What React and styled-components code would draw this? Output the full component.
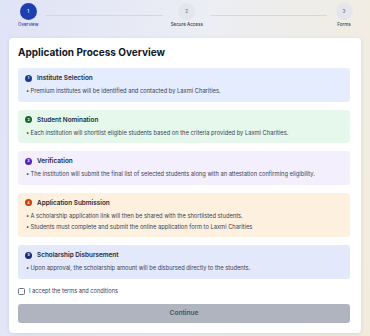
import React, {useState} from 'react';
import styled, {createGlobalStyle} from "styled-components";

const GlobalStyle = createGlobalStyle`
  html, body {
    margin: 0;
    padding: 0;
  }
  body {
    font-family: Inter, "Noto Sans", sans-serif;
    color: #1f2937;
  }
`;

const Page = styled.div`
  width: 370px;
  height: 336px;
  box-sizing: border-box;
  overflow: hidden;
  padding-top: 1px;
  background: linear-gradient(100deg, #dfe3f6 0%, #eceef4 50%, #f2ecdc 100%);
`;

const Stepper = styled.div`
  display: flex;
  align-items: center;
  padding: 0 17px 0 18px;
  height: 28px;
  margin-bottom: 9px;
`;

const Step = styled.div`
  display: flex;
  flex-direction: column;
  align-items: center;
  gap: 2px;
  min-width: 18px;
`;

const StepCircle = styled.div`
  width: 17px;
  height: 17px;
  border-radius: 50%;
  display: flex;
  align-items: center;
  justify-content: center;
  font-size: 4.5px;
  font-weight: 500;
  background: ${p => p.$active ? "#1e40af" : "#e4e6ec"};
  color: ${p => p.$active ? "#ffffff" : "#6b7280"};
`;

const StepLabel = styled.div`
  font-size: 4.5px;
  line-height: 6px;
  font-weight: 500;
  white-space: nowrap;
  color: ${p => p.$active ? "#1e40af" : "#374151"};
`;

const StepLine = styled.div`
  flex: 1;
  height: 1px;
  margin: 0 8px;
  background: #d4d7de;
`;

const Card = styled.div`
  margin: 0 9px;
  background: #ffffff;
  border-radius: 4px;
  box-shadow: 0 1px 4px rgba(60, 60, 90, 0.12);
  padding: 8px 11px 10px 9px;
  box-sizing: border-box;
  height: 295px;
`;

const Title = styled.h1`
  margin: 0 0 10px;
  font-size: 10px;
  line-height: 12px;
  font-weight: 700;
  color: #111827;
`;

const Sections = styled.div`
  display: flex;
  flex-direction: column;
  gap: 8px;
`;

const Section = styled.div`
  background: ${p => p.$bg};
  border-radius: 3px;
  padding: 6px 7px 5.5px;
`;

const SectionHead = styled.div`
  display: flex;
  align-items: center;
  gap: 5px;
  height: 8px;
`;

const Badge = styled.span`
  width: 7px;
  height: 7px;
  border-radius: 50%;
  background: ${p => p.$color};
  color: #fff;
  font-size: 3.5px;
  font-weight: 700;
  display: flex;
  align-items: center;
  justify-content: center;
`;

const SectionTitle = styled.span`
  font-size: 6.4px;
  line-height: 8px;
  font-weight: 600;
  color: #1f2937;
`;

const Bullets = styled.ul`
  margin: 3px 0 0;
  padding: 0 0 0 1px;
  list-style: none;
`;

const Bullet = styled.li`
  display: flex;
  gap: 1.5px;
  font-size: 5.75px;
  line-height: 11px;
  color: #374151;
  &::before {
    content: "•";
    width: 3px;
    text-align: center;
  }
`;

const CheckRow = styled.label`
  display: flex;
  align-items: center;
  gap: 4px;
  margin-top: 9px;
  height: 7px;
  font-size: 5.65px;
  color: #374151;
`;

const Check = styled.input`
  appearance: none;
  margin: 0;
  width: 7px;
  height: 7px;
  border: 0.8px solid #6b7280;
  border-radius: 1.5px;
  background: #fff;
  box-sizing: border-box;
  &:checked {
    background: #1e40af;
    border-color: #1e40af;
  }
`;

const ContinueButton = styled.button`
  display: block;
  width: 100%;
  margin-top: 9px;
  height: 19px;
  border: none;
  border-radius: 3px;
  background: ${p => p.$enabled ? "#1e40af" : "#afb4bf"};
  color: ${p => p.$enabled ? "#fff" : "#4b505b"};
  font-family: inherit;
  font-size: 6.6px;
  font-weight: 600;
  cursor: pointer;
`;

const steps = [
  {n: 1, label: "Overview"},
  {n: 2, label: "Secure Access"},
  {n: 3, label: "Forms"},
];

const sections = [
  {
    title: "Institute Selection", bg: "#e4ecfd", badge: "#1e3a8a",
    items: ["Premium institutes will be identified and contacted by Laxmi Charities."]
  },
  {
    title: "Student Nomination", bg: "#e5f8eb", badge: "#166534",
    items: ["Each institution will shortlist eligible students based on the criteria provided by Laxmi Charities."]
  },
  {
    title: "Verification", bg: "#f3effd", badge: "#5b21b6",
    items: ["The institution will submit the final list of selected students along with an attestation confirming eligibility."]
  },
  {
    title: "Application Submission", bg: "#fdf0df", badge: "#c2410c",
    items: [
      "A scholarship application link will then be shared with the shortlisted students.",
      "Students must complete and submit the online application form to Laxmi Charities"
    ]
  },
  {
    title: "Scholarship Disbursement", bg: "#e3e8fb", badge: "#1e2a78",
    items: ["Upon approval, the scholarship amount will be disbursed directly to the students."]
  },
];

const App = () => {
  const [accepted, setAccepted] = useState(false);

  return <Page>
    <GlobalStyle/>
    <Stepper>
      {steps.map((step, i) => <React.Fragment key={step.n}>
        {i > 0 && <StepLine/>}
        <Step>
          <StepCircle $active={i === 0}>{step.n}</StepCircle>
          <StepLabel $active={i === 0}>{step.label}</StepLabel>
        </Step>
      </React.Fragment>)}
    </Stepper>
    <Card>
      <Title>Application Process Overview</Title>
      <Sections>
        {sections.map((s, i) => <Section key={s.title} $bg={s.bg}>
          <SectionHead>
            <Badge $color={s.badge}>{i + 1}</Badge>
            <SectionTitle>{s.title}</SectionTitle>
          </SectionHead>
          <Bullets>
            {s.items.map(item => <Bullet key={item}>{item}</Bullet>)}
          </Bullets>
        </Section>)}
      </Sections>
      <CheckRow>
        <Check type="checkbox" checked={accepted} onChange={e => setAccepted(e.target.checked)}/>
        I accept the terms and conditions
      </CheckRow>
      <ContinueButton $enabled={accepted} disabled={!accepted}>Continue</ContinueButton>
    </Card>
  </Page>
}

export default App;
